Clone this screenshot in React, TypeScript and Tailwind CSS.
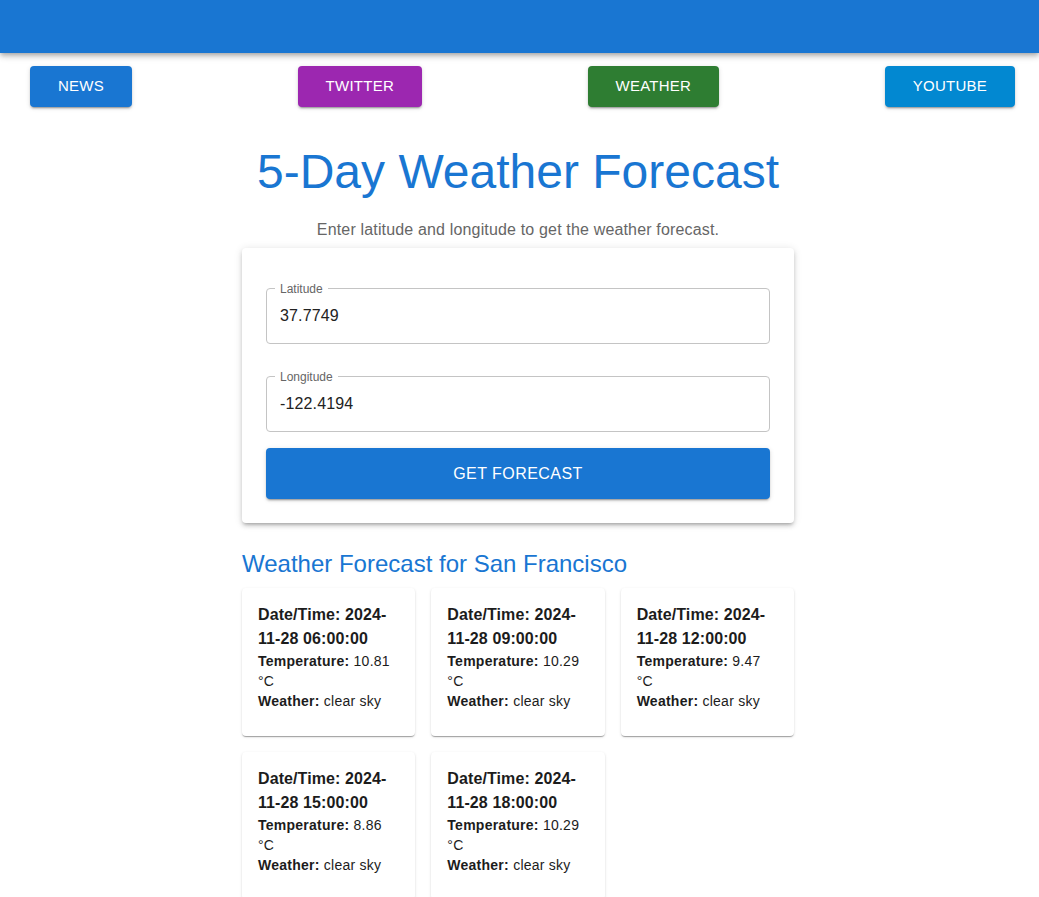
import React from 'react';

const navButtons = [
  { label: 'NEWS', color: 'bg-[#1976d2]' },
  { label: 'TWITTER', color: 'bg-[#9c27b0]' },
  { label: 'WEATHER', color: 'bg-[#2e7d32]' },
  { label: 'YOUTUBE', color: 'bg-[#0288d1]' },
];

const forecast = [
  { dt: '2024-11-28 06:00:00', temp: '10.81', weather: 'clear sky' },
  { dt: '2024-11-28 09:00:00', temp: '10.29', weather: 'clear sky' },
  { dt: '2024-11-28 12:00:00', temp: '9.47', weather: 'clear sky' },
  { dt: '2024-11-28 15:00:00', temp: '8.86', weather: 'clear sky' },
  { dt: '2024-11-28 18:00:00', temp: '10.29', weather: 'clear sky' },
];

function OutlinedField({ label, value }: { label: string; value: string }) {
  return (
    <div className="relative h-14 rounded border border-[#c4c4c4] flex items-center px-[13px]">
      <span className="absolute -top-[8px] left-[8px] bg-white px-[5px] text-xs leading-4 text-[#666]">
        {label}
      </span>
      <input
        readOnly
        value={value}
        className="w-full bg-transparent text-base tracking-[0.15px] text-[#222] outline-none"
      />
    </div>
  );
}

export default function App() {
  return (
    <div className="min-h-screen bg-white font-['Liberation_Sans',Arial,sans-serif]">
      <div className="h-[53px] bg-[#1976d2] shadow-[0_2px_4px_-1px_rgba(0,0,0,0.2),0_4px_5px_0_rgba(0,0,0,0.14),0_1px_10px_0_rgba(0,0,0,0.12)]" />

      <div className="mt-[13px] flex justify-between pl-[30px] pr-[24px]">
        {navButtons.map(b => (
          <button
            key={b.label}
            className={`${b.color} h-[41px] rounded px-[28px] text-[15px] tracking-[0.25px] text-white shadow-[0_3px_1px_-2px_rgba(0,0,0,0.2),0_2px_2px_0_rgba(0,0,0,0.14),0_1px_5px_0_rgba(0,0,0,0.12)]`}
          >
            {b.label}
          </button>
        ))}
      </div>

      <div className="w-[1036px]">
        <div className="mx-auto w-[552px]">
          <h1 className="mt-[37px] text-center text-5xl leading-[56px] text-[#1976d2] whitespace-nowrap">
            5-Day Weather Forecast
          </h1>
          <p className="mt-[18px] text-center text-base leading-6 tracking-[0.16px] text-[#666]">
            Enter latitude and longitude to get the weather forecast.
          </p>

          <div className="mt-[6px] rounded bg-white px-6 pt-10 pb-6 shadow-[0_3px_3px_-2px_rgba(0,0,0,0.2),0_3px_4px_0_rgba(0,0,0,0.14),0_1px_8px_0_rgba(0,0,0,0.12)]">
            <OutlinedField label="Latitude" value="37.7749" />
            <div className="mt-8">
              <OutlinedField label="Longitude" value="-122.4194" />
            </div>
            <button className="mt-4 h-[51px] w-full rounded bg-[#1976d2] text-base tracking-[0.46px] text-white shadow-[0_3px_1px_-2px_rgba(0,0,0,0.2),0_2px_2px_0_rgba(0,0,0,0.14),0_1px_5px_0_rgba(0,0,0,0.12)]">
              GET FORECAST
            </button>
          </div>

          <h2 className="mt-[25px] text-2xl leading-8 text-[#1976d2]">
            Weather Forecast for San Francisco
          </h2>

          <div className="mt-[8px] grid grid-cols-3 gap-4 pb-8">
            {forecast.map(f => (
              <div
                key={f.dt}
                className="rounded bg-white px-4 pt-[15px] pb-[25px] shadow-[0_2px_1px_-1px_rgba(0,0,0,0.2),0_1px_1px_0_rgba(0,0,0,0.14),0_1px_3px_0_rgba(0,0,0,0.12)]"
              >
                <div className="text-base font-bold leading-6 tracking-[0.1px] text-[#1c1c1c]">
                  Date/Time: {f.dt}
                </div>
                <div className="text-sm leading-5 tracking-[0.25px] text-[#1c1c1c]">
                  <b>Temperature:</b> {f.temp} °C
                </div>
                <div className="text-sm leading-5 tracking-[0.25px] text-[#1c1c1c]">
                  <b>Weather:</b> {f.weather}
                </div>
              </div>
            ))}
          </div>
        </div>
      </div>
    </div>
  );
}
